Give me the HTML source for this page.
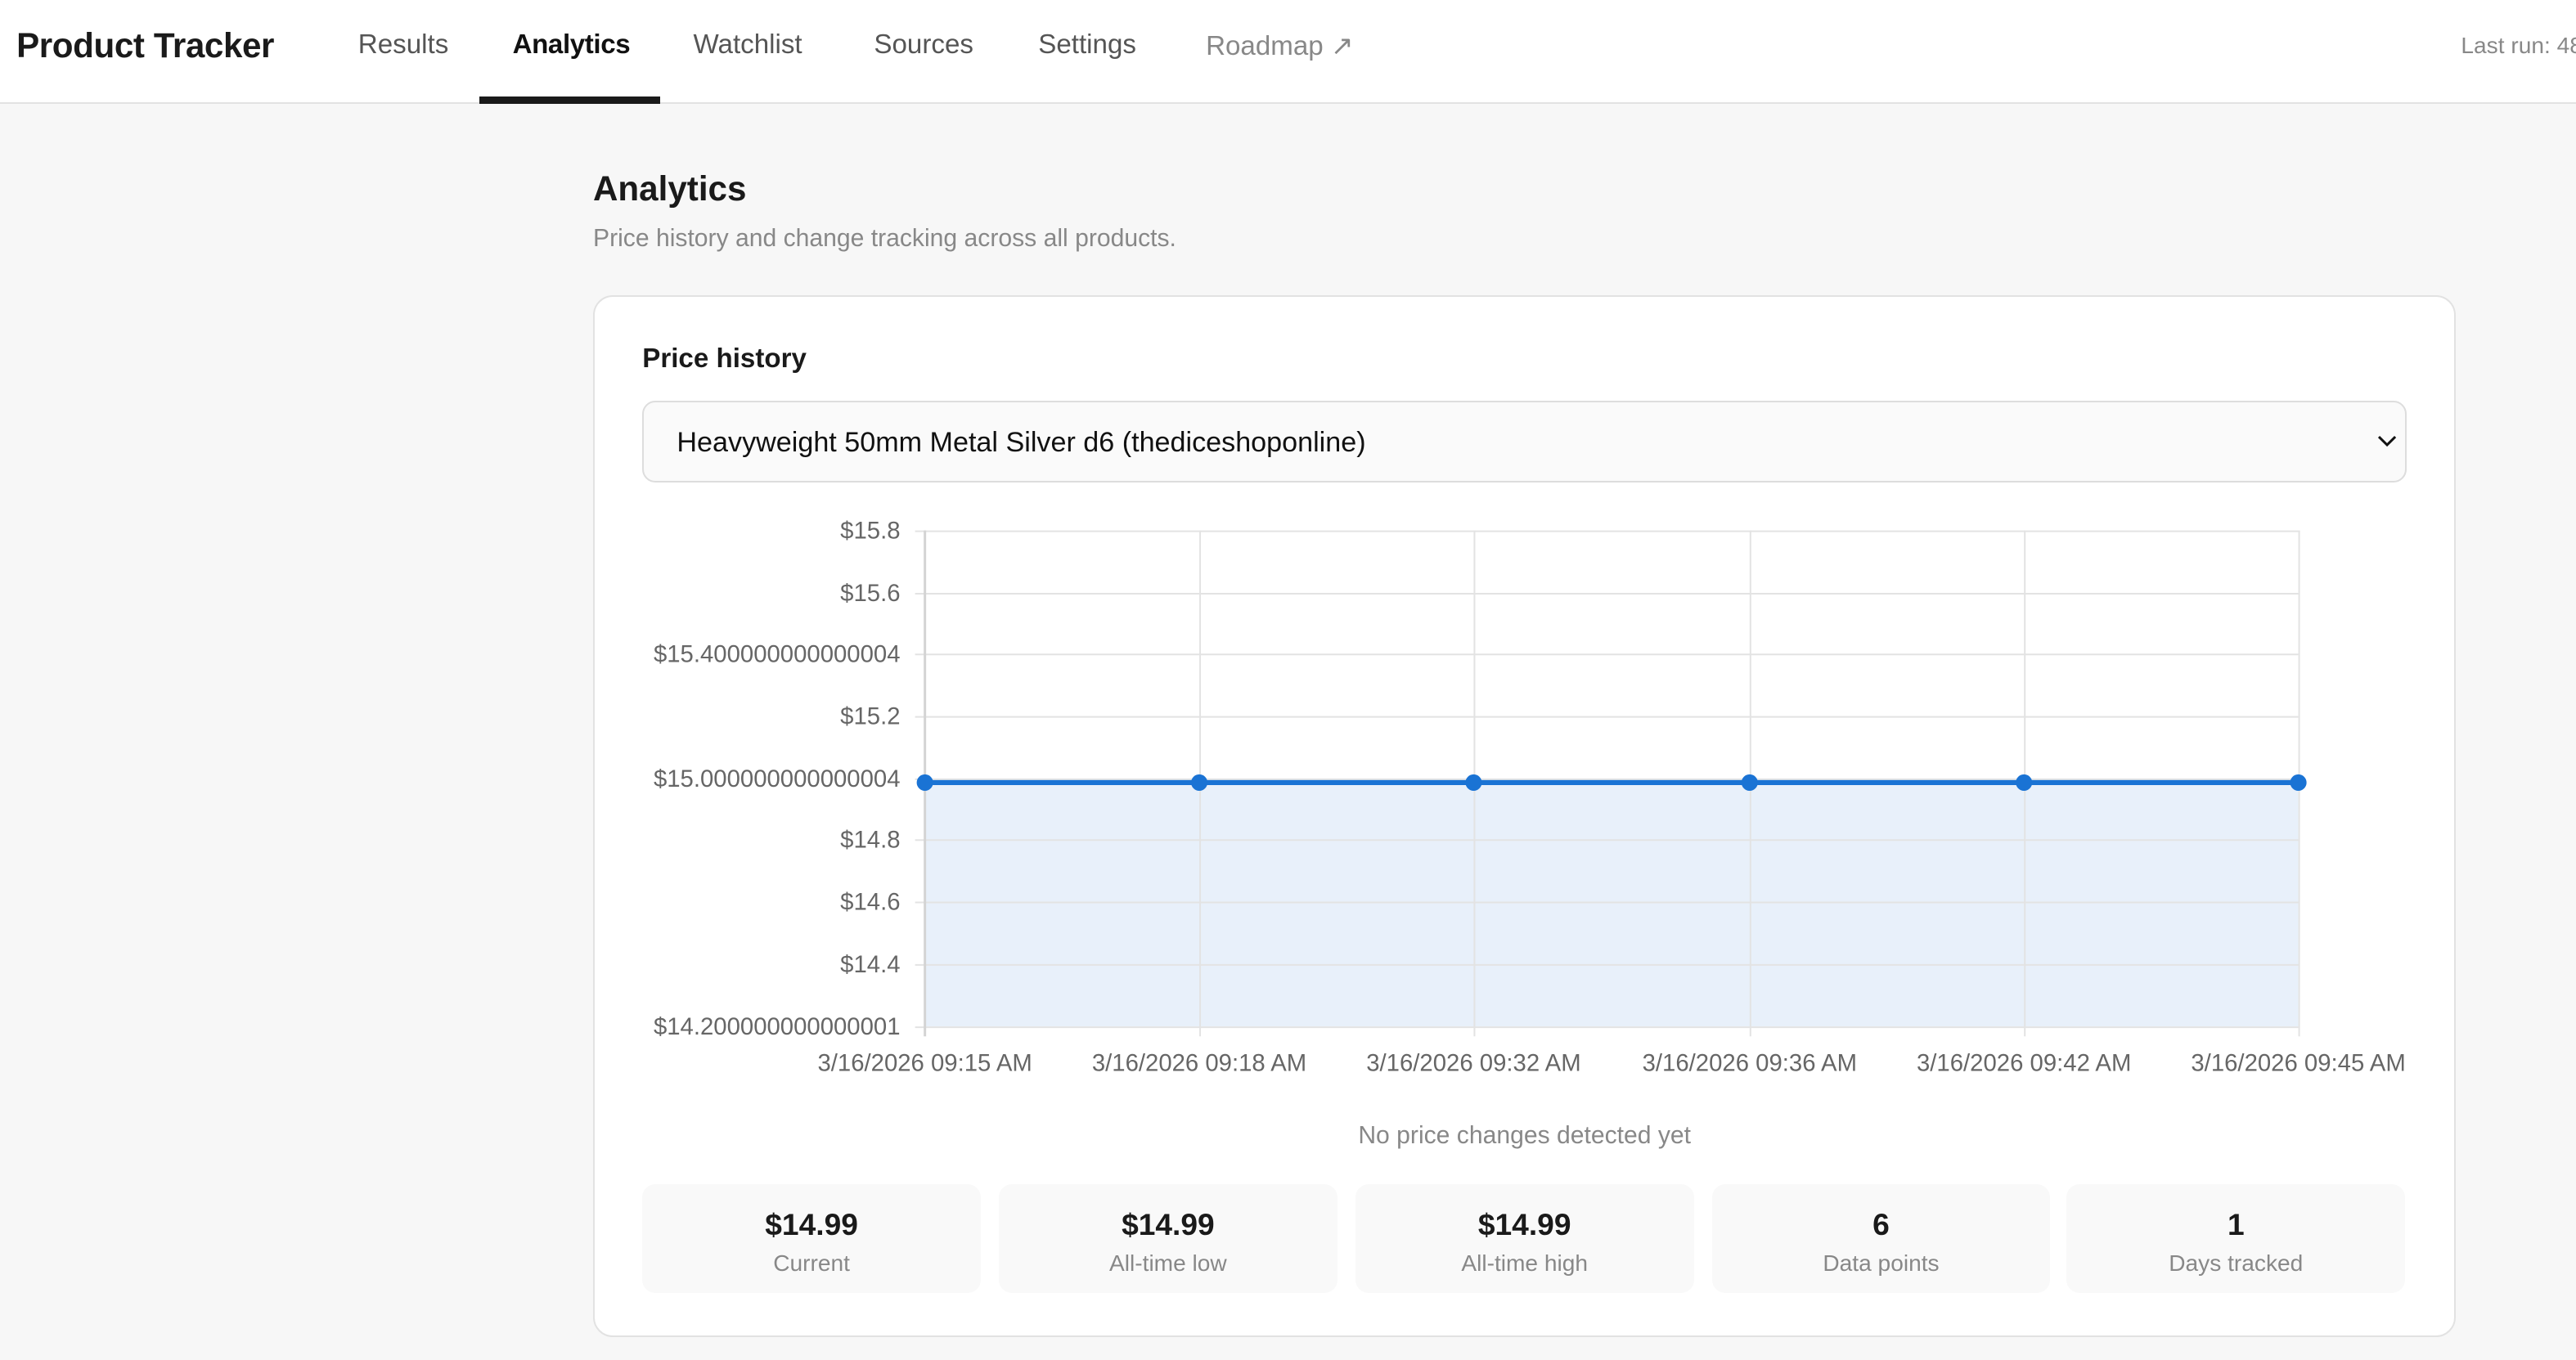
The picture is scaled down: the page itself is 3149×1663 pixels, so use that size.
<!DOCTYPE html>
<html><head><meta charset="utf-8"><style>
html,body{margin:0;padding:0;overflow:hidden}
body{width:3149px;height:1663px;background:#f7f7f7}
#c{position:absolute;left:0;top:0;width:1568px;height:828px;zoom:2.00829;font-family:"Liberation Sans","DejaVu Sans",sans-serif;color:#1a1a1a}
.a{position:absolute;white-space:nowrap}
.nav{font-size:16.5px;color:#555;top:18px}
.box{position:absolute;top:721px;width:206px;height:66px;background:#f9f9f9;border-radius:8px;text-align:center}
.box b{display:block;font-size:18.5px;margin-top:14px;color:#1a1a1a}
.box span{display:block;font-size:14px;color:#888;margin-top:5px}
</style></head><body><div id="c">
<div class="a" style="left:0;top:0;width:1568px;height:62px;background:#fff;border-bottom:1px solid #e2e2e2"></div>
<div class="a" style="left:10px;top:16px;font-size:21px;font-weight:bold;color:#1a1a1a;letter-spacing:-0.2px">Product Tracker</div>
<div class="a nav" style="left:218px">Results</div>
<div class="a nav" style="left:312px;color:#111;font-weight:bold;letter-spacing:-0.2px">Analytics</div>
<div class="a" style="left:292px;top:59px;width:110px;height:4px;background:#1a1a1a"></div>
<div class="a nav" style="left:422px">Watchlist</div>
<div class="a nav" style="left:532px">Sources</div>
<div class="a nav" style="left:632px">Settings</div>
<div class="a nav" style="left:734px;color:#888">Roadmap ↗</div>
<div class="a" style="left:1498px;top:20px;font-size:14px;color:#888">Last run: 48</div>

<div class="a" style="left:361px;top:103px;font-size:21px;font-weight:bold">Analytics</div>
<div class="a" style="left:361px;top:137px;font-size:15px;color:#888">Price history and change tracking across all products.</div>

<div class="a" style="left:361px;top:180px;width:1132px;height:632px;background:#fff;border:1px solid #e2e2e2;border-radius:12px"></div>
<div class="a" style="left:391px;top:209px;font-size:16.5px;font-weight:bold">Price history</div>
<div class="a" style="left:391px;top:244px;width:1072px;height:48px;background:#fafafa;border:1px solid #ddd;border-radius:8px"></div>
<div class="a" style="left:412px;top:260px;font-size:17px;color:#111">Heavyweight 50mm Metal Silver d6 (thediceshoponline)</div>
<svg class="a" style="left:1446px;top:264px" width="14" height="10" viewBox="0 0 14 10"><path d="M2 2 L7 7 L12 2" fill="none" stroke="#111" stroke-width="1.5"/></svg>

<svg class="a" style="left:0;top:0" width="1568" height="700" viewBox="0 0 1568 700" font-family="Liberation Sans,Arial,sans-serif" font-size="14.6" fill="#666">
<rect x="563" y="476" width="836" height="149" fill="#e8f0fa"/>
<g stroke="#e3e3e3" stroke-width="1">
<line x1="557" x2="1399" y1="323.5" y2="323.5"/><line x1="557" x2="1399" y1="361.5" y2="361.5"/>
<line x1="557" x2="1399" y1="398.5" y2="398.5"/><line x1="557" x2="1399" y1="436.5" y2="436.5"/>
<line x1="557" x2="1399" y1="474.5" y2="474.5"/><line x1="557" x2="1399" y1="511.5" y2="511.5"/>
<line x1="557" x2="1399" y1="549.5" y2="549.5"/><line x1="557" x2="1399" y1="587.5" y2="587.5"/>
<line x1="557" x2="1399" y1="625.5" y2="625.5"/>
<line x1="730.5" x2="730.5" y1="323" y2="631"/><line x1="897.5" x2="897.5" y1="323" y2="631"/>
<line x1="1065.5" x2="1065.5" y1="323" y2="631"/><line x1="1232.5" x2="1232.5" y1="323" y2="631"/>
<line x1="1399.5" x2="1399.5" y1="323" y2="631"/>
</g>
<line x1="563" x2="563" y1="323" y2="631" stroke="#d4d4d4" stroke-width="1.5"/>
<g text-anchor="end">
<text x="548" y="328">$15.8</text><text x="548" y="366">$15.6</text><text x="548" y="403">$15.400000000000004</text>
<text x="548" y="441">$15.2</text><text x="548" y="479">$15.000000000000004</text><text x="548" y="516">$14.8</text>
<text x="548" y="554">$14.6</text><text x="548" y="592">$14.4</text><text x="548" y="630">$14.200000000000001</text>
</g>
<g text-anchor="middle">
<text x="563" y="652">3/16/2026 09:15 AM</text><text x="730" y="652">3/16/2026 09:18 AM</text>
<text x="897" y="652">3/16/2026 09:32 AM</text><text x="1065" y="652">3/16/2026 09:36 AM</text>
<text x="1232" y="652">3/16/2026 09:42 AM</text><text x="1399" y="652">3/16/2026 09:45 AM</text>
</g>
<line x1="563" x2="1399" y1="476.5" y2="476.5" stroke="#1a73d4" stroke-width="3"/>
<g fill="#1a73d4"><circle cx="563" cy="476.5" r="5"/><circle cx="730" cy="476.5" r="5"/><circle cx="897" cy="476.5" r="5"/><circle cx="1065" cy="476.5" r="5"/><circle cx="1232" cy="476.5" r="5"/><circle cx="1399" cy="476.5" r="5"/></g>
</svg>
<div class="a" style="left:391px;width:1074px;top:683px;text-align:center;font-size:15px;color:#888">No price changes detected yet</div>

<div class="box" style="left:391px"><b>$14.99</b><span>Current</span></div>
<div class="box" style="left:608px"><b>$14.99</b><span>All-time low</span></div>
<div class="box" style="left:825px"><b>$14.99</b><span>All-time high</span></div>
<div class="box" style="left:1042px"><b>6</b><span>Data points</span></div>
<div class="box" style="left:1258px"><b>1</b><span>Days tracked</span></div>
</div></body></html>
